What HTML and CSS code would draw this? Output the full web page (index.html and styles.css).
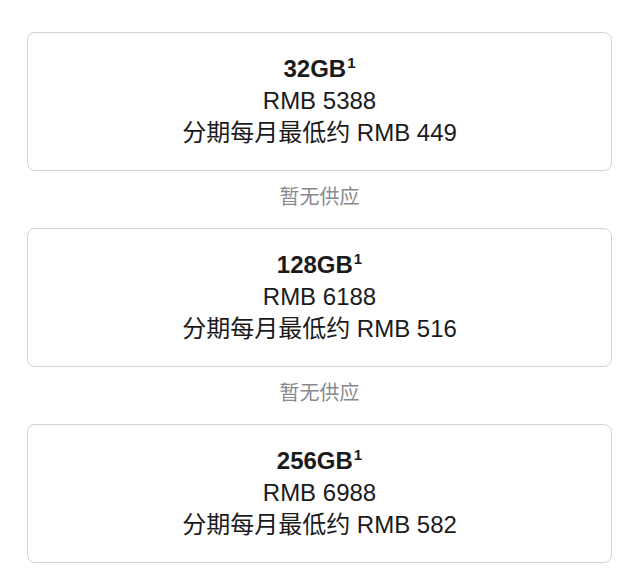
FILE: index.html
```html
<!DOCTYPE html>
<html lang="zh-CN">
  <head>
    <meta charset="UTF-8" />
    <meta name="viewport" content="width=device-width, initial-scale=1.0" />
    <title>选择容量</title>
    <link rel="stylesheet" href="styles.css">
  </head>
  <body>
    <div class="options">
      <div class="option">
        <div class="size">32GB<sup>1</sup></div>
        <div>RMB 5388</div>
        <div>分期每月最低约 RMB 449</div>
      </div>
      <div class="note">暂无供应</div>
      <div class="option">
        <div class="size">128GB<sup>1</sup></div>
        <div>RMB 6188</div>
        <div>分期每月最低约 RMB 516</div>
      </div>
      <div class="note">暂无供应</div>
      <div class="option">
        <div class="size">256GB<sup>1</sup></div>
        <div>RMB 6988</div>
        <div>分期每月最低约 RMB 582</div>
      </div>
    </div>
  </body>
</html>
```

FILE: styles.css
```css
body {
  margin: 0;
  background-color: white;
  font-family: "Liberation Sans", "Noto Sans CJK SC", sans-serif;
  color: #1a1a1c;
}
.options {
  padding: 32px 28px 0 27px;
}
.option {
  border: 1px solid #d4d4d6;
  border-radius: 8px;
  padding: 20px 0 21px;
  font-size: 24px;
  line-height: 32px;
  text-align: center;
}
.option > div {
  height: 32px;
}
.size {
  font-weight: bold;
}
.size sup {
  font-size: 15px;
  line-height: 1;
  vertical-align: 9px;
  margin-left: 1px;
}
.note {
  padding: 14px 0 19px;
  font-size: 20px;
  line-height: 24px;
  text-align: center;
  color: #8a8a8e;
}
```
